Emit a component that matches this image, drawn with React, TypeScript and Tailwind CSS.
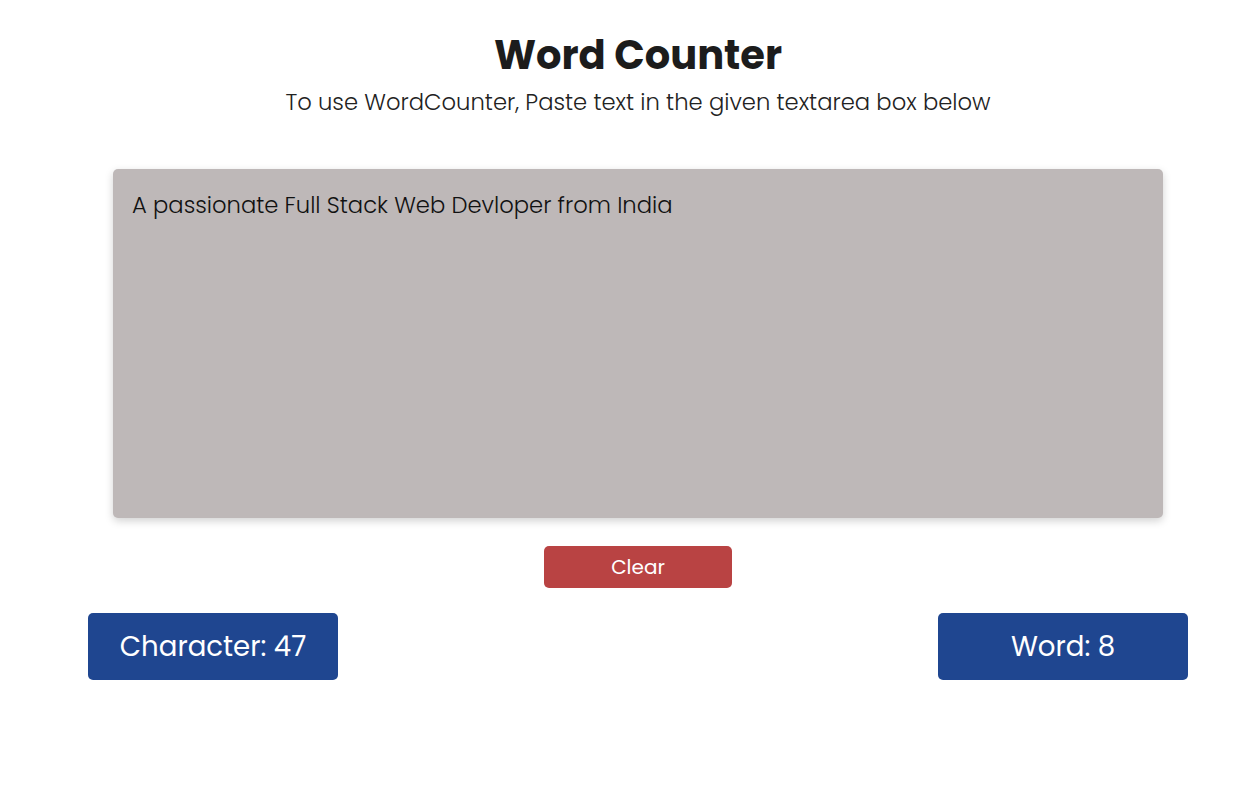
import React, { useState } from "react";

export default function App() {
  const [text, setText] = useState("A passionate Full Stack Web Devloper from India");
  const chars = text.length;
  const words = text.trim() === "" ? 0 : text.trim().split(/\s+/).length;
  return (
    <div
      className="min-h-[785px] w-[1276px] bg-white text-[#1c1c1c]"
      style={{ fontFamily: "Poppins, 'Open Sans', sans-serif" }}
    >
      <div className="flex flex-col items-center pt-[30px]">
        <h1 className="text-[40px] font-bold leading-[50px] text-[#1c1c1c]">Word Counter</h1>
        <p className="mt-[6px] text-[22.7px] font-light leading-[32px] text-[#222]">
          To use WordCounter, Paste text in the given textarea box below
        </p>
        <textarea
          value={text}
          onChange={(e) => setText(e.target.value)}
          className="mt-[51px] h-[349px] w-[1050px] resize-none rounded-[5px] bg-[#beb8b8] px-[19px] py-[20px] text-[22.7px] font-light leading-[32px] text-[#111] shadow-[0_3px_8px_rgba(0,0,0,0.18)] outline-none"
        />
        <button
          onClick={() => setText("")}
          className="mt-[28px] h-[42px] w-[188px] rounded-[5px] bg-[#b94343] text-[20px] text-white"
        >
          Clear
        </button>
        <div className="mt-[25px] flex w-full justify-between px-[88px]">
          <div className="flex h-[67px] w-[250px] items-center justify-center rounded-[5px] bg-[#1f4690] text-[27.6px] text-white">
            Character: {chars}
          </div>
          <div className="flex h-[67px] w-[250px] items-center justify-center rounded-[5px] bg-[#1f4690] text-[27.6px] text-white">
            Word: {words}
          </div>
        </div>
      </div>
    </div>
  );
}
